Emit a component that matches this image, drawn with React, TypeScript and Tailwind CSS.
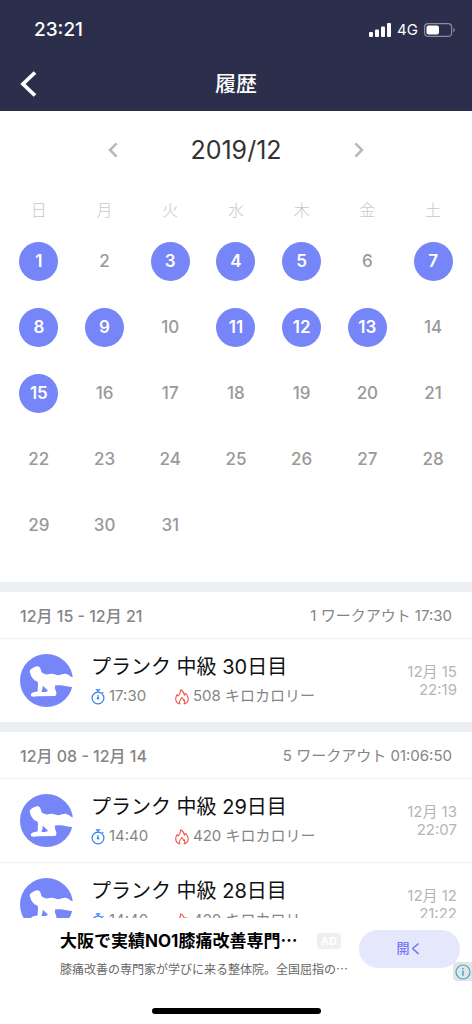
const weekdays = ["日", "月", "火", "水", "木", "金", "土"];
const workoutDays = [1, 3, 4, 5, 7, 8, 9, 11, 12, 13, 15];
const days = Array.from({ length: 31 }, (_, i) => i + 1);

type Workout = { title: string; duration: string; kcal: number; date: string; time: string };
type Week = { range: string; count: number; total: string; workouts: Workout[] };

const weeks: Week[] = [
  {
    range: "12月 15 - 12月 21",
    count: 1,
    total: "17:30",
    workouts: [{ title: "プランク 中級 30日目", duration: "17:30", kcal: 508, date: "12月 15", time: "22:19" }],
  },
  {
    range: "12月 08 - 12月 14",
    count: 5,
    total: "01:06:50",
    workouts: [
      { title: "プランク 中級 29日目", duration: "14:40", kcal: 420, date: "12月 13", time: "22:07" },
      { title: "プランク 中級 28日目", duration: "14:40", kcal: 420, date: "12月 12", time: "21:22" },
    ],
  },
];

function PlankIcon() {
  return (
    <svg viewBox="0 0 158 158" className="size-[53px] shrink-0" aria-hidden>
      <circle cx="79" cy="79" r="79" fill="#7685f8" />
      <path
        fill="#fff"
        fillRule="evenodd"
        d="M48 37C42 38 38 42 34 44C28 48 28 54 31 59C33 67 37 73 43 78C47 80 51 80 53 84C55 92 52 100 53 110C48 114 41 112 36 116C31 118 31 125 36 127C42 128 48 126 54 126L104 125C110 123 109 116 107 110C104 104 103 99 105 94C114 92 120 93 128 94C138 96 148 98 158 99V69C151 69 148 62 140 60C132 57 124 61 116 63C108 63 102 59 94 59C87 59 80 63 73 59C65 58 63 52 62 46C60 39 56 36 48 37ZM68 95C73 98 77 104 84 110C78 113 71 113 64 113C67 107 67 101 68 95Z"
      />
    </svg>
  );
}

function TimerIcon() {
  return (
    <svg viewBox="0 0 14 16" className="h-4 w-3.5" fill="none" stroke="#2f7cf6" aria-hidden>
      <circle cx="7" cy="9" r="5.9" strokeWidth="1.2" />
      <path d="M4.8 .8h4.4M7 .8V3M11.3 3.2l1 1" strokeWidth="1.2" />
      <path d="M7 6v3" strokeWidth="1.1" />
      <circle cx="7" cy="9.4" r=".8" fill="#2f7cf6" />
    </svg>
  );
}

function FlameIcon() {
  return (
    <svg viewBox="0 0 14 16" className="h-4 w-3.5" fill="none" stroke="#ee5644" strokeWidth="1.1" strokeLinejoin="round" aria-hidden>
      <path d="M5 15C2.400 14.400 .7 12.300 .7 9.800C.7 8.300 1.300 7 2 5.700L3.400 6.800C4.800 5 5.800 3.200 5.700 .8C7.900 2 9.200 3.900 9.500 6.200L10.800 4.500C12.300 6.200 13.200 7.900 13.200 9.800C13.200 12.400 11.400 14.500 8.900 15" />
      <path d="M5 15C4 13.500 4.200 12.200 5.200 11C6 10.100 6.500 9.400 6.600 8.500C7.900 9.300 8.400 10.300 8.500 11.400L9.500 10.900C10.100 12.400 9.900 13.900 8.900 15" />
    </svg>
  );
}

function Chevron({ back = false }: { back?: boolean }) {
  return (
    <svg viewBox="0 0 10 16" className="h-4 w-2.5" fill="none" stroke="#b9b9b9" strokeWidth="2.6" aria-hidden>
      <path d={back ? "M8.6 1.3 2 8l6.6 6.7" : "M1.4 1.3 8 8l-6.6 6.7"} />
    </svg>
  );
}

// 欧文フォントでは三点リーダーが下に付くため和文フォントで出す
function Ellipsis() {
  return <span className="font-['Noto_Sans_CJK_JP',sans-serif]">…</span>;
}

function StatusBar() {
  return (
    <div className="flex h-14 items-center justify-between pt-1 pr-4 pl-[34px]">
      <span className="text-[19px] font-medium">23:21</span>
      <div className="flex items-center gap-1.5">
        <svg viewBox="0 0 22 14" className="h-3.5 w-[22px]" fill="currentColor" aria-hidden>
          <rect x="0" y="9" width="4" height="5" rx="1" />
          <rect x="6" y="6.5" width="4" height="7.5" rx="1" />
          <rect x="12" y="3.5" width="4" height="10.5" rx="1" />
          <rect x="18" y="0" width="4" height="14" rx="1" />
        </svg>
        <span className="text-[15px]">4G</span>
        <svg viewBox="0 0 32 14" className="h-3.5 w-8" aria-hidden>
          <rect x=".6" y=".6" width="27" height="12.8" rx="3.5" fill="none" stroke="#8b8d9f" strokeWidth="1.2" />
          <rect x="2.5" y="2.5" width="12.5" height="9" rx="2" fill="#fff" />
          <path d="M29.3 4.8c2 .8 2 3.6 0 4.4Z" fill="#8b8d9f" />
        </svg>
      </div>
    </div>
  );
}

function WorkoutRow({ workout }: { workout: Workout }) {
  return (
    <li className="flex h-[84px] items-center border-t border-[#eff1f3] pr-[15px] pl-5">
      <PlankIcon />
      <div className="ml-[18px] min-w-0 flex-1">
        <h3 className="text-xl leading-7 text-[#111]">{workout.title}</h3>
        <div className="mt-1 flex h-6 items-center text-[15px] text-[#858585]">
          <span className="flex w-[84px] items-center gap-1">
            <TimerIcon />
            {workout.duration}
          </span>
          <span className="flex items-center gap-1 whitespace-nowrap">
            <FlameIcon />
            {workout.kcal} キロカロリー
          </span>
        </div>
      </div>
      <p className="text-right text-[15px] leading-[18px] text-[#b5b5b5]">
        {workout.date}
        <br />
        {workout.time}
      </p>
    </li>
  );
}

export default function App() {
  return (
    <div className="flex h-screen flex-col overflow-hidden bg-white font-[Inter,'Noto_Sans_CJK_JP',sans-serif]">
      <header className="shrink-0 bg-[#2b2f4b] text-white">
        <StatusBar />
        <div className="grid h-[55px] grid-cols-[56px_1fr_56px] items-center">
          <button type="button" aria-label="戻る" className="pl-5">
            <svg viewBox="0 0 17 26" className="h-[26px] w-[17px]" fill="none" stroke="currentColor" strokeWidth="3.8" aria-hidden>
              <path d="M15 1.5 3 13l12 11.5" />
            </svg>
          </button>
          <h1 className="text-center text-[21px] font-medium">履歴</h1>
        </div>
      </header>

      <main className="min-h-0 flex-1 overflow-hidden">
        <section className="px-1.5 pb-6">
          <div className="flex h-[78px] items-center justify-center">
            <button type="button" aria-label="前の月" className="p-2">
              <Chevron back />
            </button>
            <h2 className="w-[220px] pt-0.5 text-center text-[25px] text-[#333]">2019/12</h2>
            <button type="button" aria-label="次の月" className="p-2">
              <Chevron />
            </button>
          </div>
          <table className="w-full table-fixed border-collapse text-center">
            <thead>
              <tr className="h-[39px] text-base text-[#c8c8c8]">
                {weekdays.map((d) => (
                  <th key={d} className="p-0 pt-0.5 font-light">
                    {d}
                  </th>
                ))}
              </tr>
            </thead>
            <tbody>
              {[0, 7, 14, 21, 28].map((start) => (
                <tr key={start} className="h-[66px]">
                  {days.slice(start, start + 7).map((d) => (
                    <td key={d} className="p-0">
                      <span
                        className={
                          workoutDays.includes(d)
                            ? "mx-auto grid size-[39px] place-items-center rounded-full bg-[#7685f8] pt-0.5 text-[17px] font-semibold text-white"
                            : "mx-auto grid size-[39px] place-items-center pt-0.5 text-[17px] font-medium text-[#999]"
                        }
                      >
                        {d}
                      </span>
                    </td>
                  ))}
                </tr>
              ))}
            </tbody>
          </table>
        </section>

        {weeks.map((week) => (
          <section key={week.range} className="border-t-10 border-[#ebeff2]">
            <div className="flex h-[46px] items-center justify-between px-5 pt-0.5 text-[#858585]">
              <h2 className="text-base font-medium">{week.range}</h2>
              <span className="text-[15px]">
                {week.count} ワークアウト {week.total}
              </span>
            </div>
            <ul>
              {week.workouts.map((w) => (
                <WorkoutRow key={w.title} workout={w} />
              ))}
            </ul>
          </section>
        ))}
      </main>

      <footer className="relative h-[106px] shrink-0 bg-white">
        <div className="flex items-start pt-3 pr-3 pl-[60px]">
          <div className="min-w-0 flex-1">
            <div className="flex items-center justify-between pr-[18px]">
              <h3 className="text-[17px] leading-5 font-bold whitespace-nowrap text-black">
                大阪で実績NO1膝痛改善専門
                <Ellipsis />
              </h3>
              <span className="rounded-sm bg-[#efefef] px-1 text-[11px] leading-4 font-bold text-white">AD</span>
            </div>
            <p className="mt-2 text-xs leading-5 whitespace-nowrap text-[#666]">
              膝痛改善の専門家が学びに来る整体院。全国屈指の
              <Ellipsis />
            </p>
          </div>
          <button type="button" className="h-[38px] w-[101px] rounded-full bg-[#e5e7fd] text-[13px] font-medium text-[#7478f4]">
            開く
          </button>
        </div>
        <button type="button" aria-label="広告について" className="absolute top-11 right-0 grid size-[19px] place-items-center rounded-l-sm bg-[#e4e4e4]">
          <svg viewBox="0 0 16 16" className="size-4" fill="none" stroke="#3fa9cf" aria-hidden>
            <circle cx="8" cy="8" r="7" strokeWidth="1.2" />
            <path d="M8 6.8v5" strokeWidth="1.6" />
            <circle cx="8" cy="4.6" r=".9" fill="#3fa9cf" stroke="none" />
          </svg>
        </button>
        <div className="absolute inset-x-0 bottom-[10px] mx-auto h-1.5 w-[169px] rounded-full bg-black" />
      </footer>
    </div>
  );
}
